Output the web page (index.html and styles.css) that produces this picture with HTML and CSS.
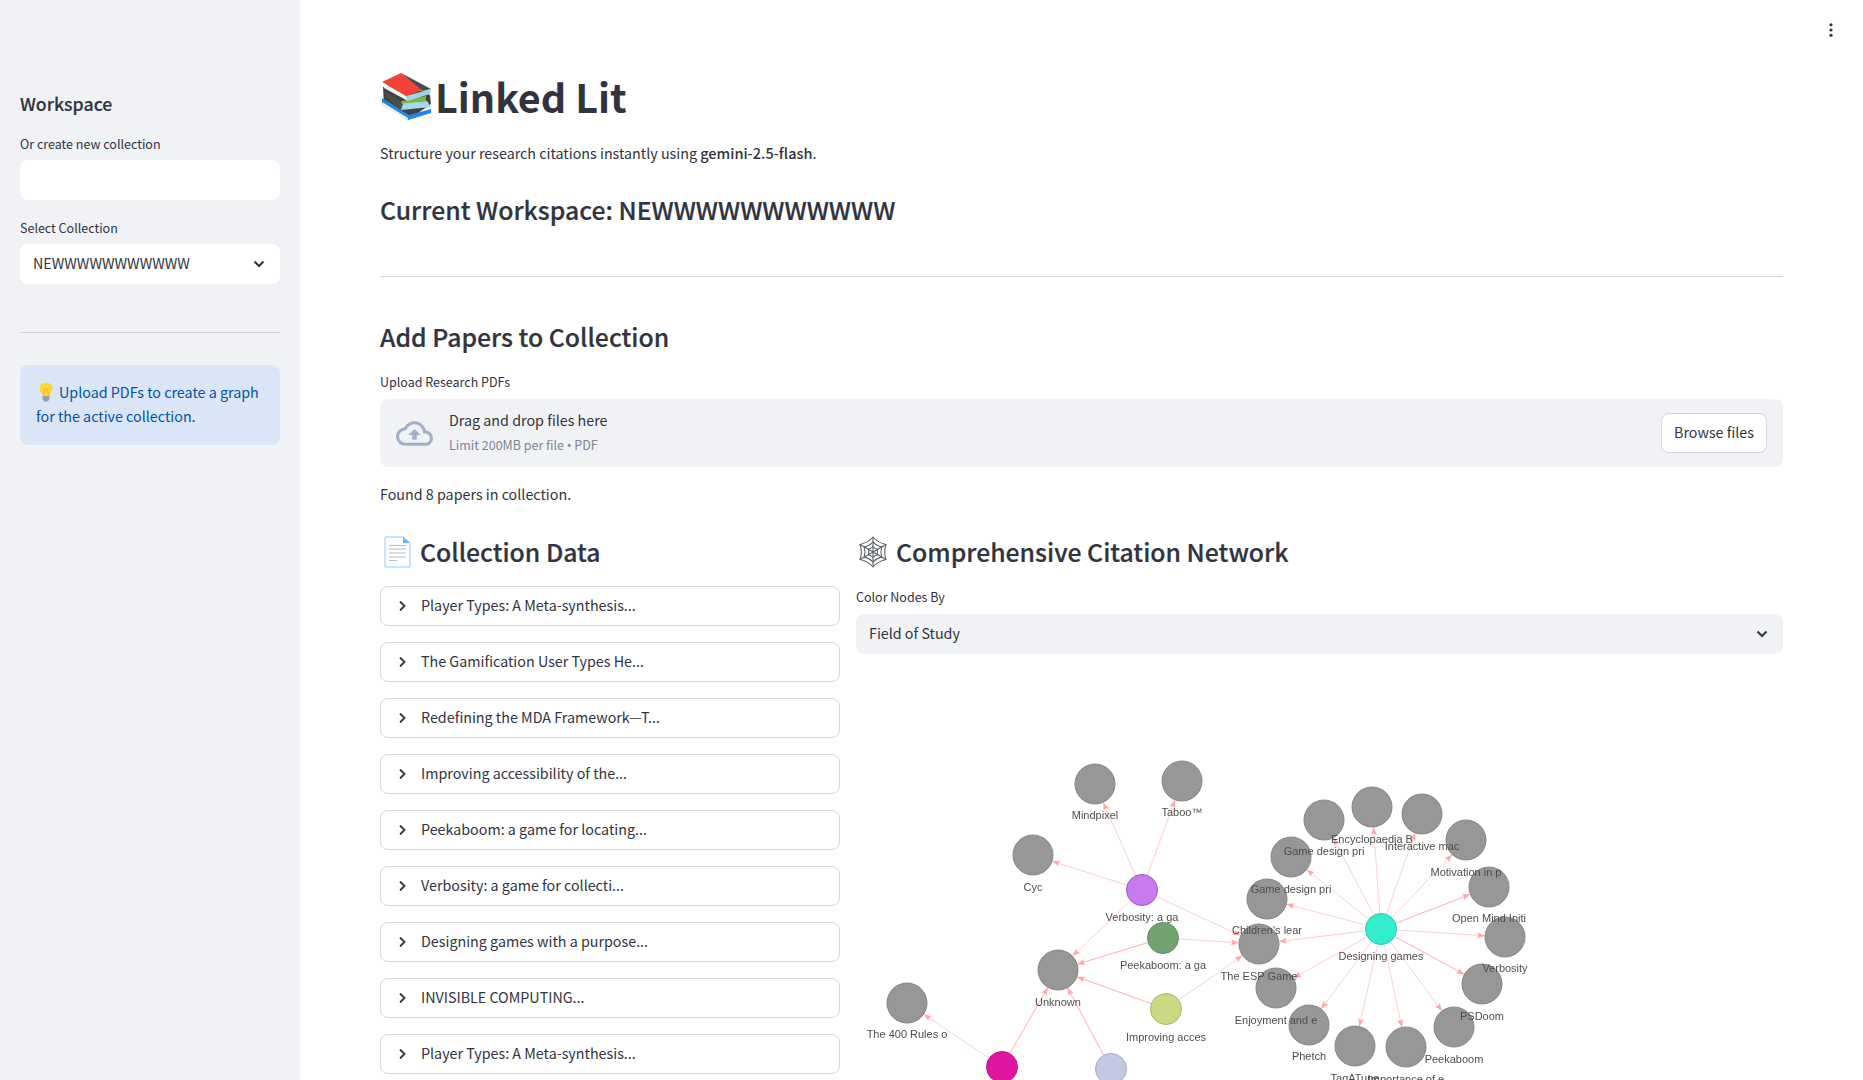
FILE: index.html
```html
<!DOCTYPE html>
<html lang="en">
<head>
<meta charset="utf-8">
<title>Linked Lit</title>
<link rel="stylesheet" href="styles.css">
</head>
<body>
<aside class="sidebar">
  <h3 class="side-title">Workspace</h3>
  <label class="field-label first">Or create new collection</label>
  <div class="input"></div>
  <label class="field-label second">Select Collection</label>
  <div class="select white">
    <span>NEWWWWWWWWWWW</span>
    <svg class="chev" viewBox="0 0 12 8"><path d="M1.5 1.5 6 6l4.5-4.5"/></svg>
  </div>
  <hr class="side-rule">
  <div class="info">
    <svg class="bulb" viewBox="0 0 16 20">
      <path d="M8 .5C4 .5 1.5 3.3 1.5 6.6c0 3 2.3 4.4 2.8 7.4h7.4c.5-3 2.8-4.4 2.8-7.4C14.500 3.300 12 .5 8 .5z" fill="#fdd835"/>
      <path d="M5.500 13.800 6.800 7h2.400l1.300 6.800" fill="none" stroke="#f9a825" stroke-width=".8"/>
      <path d="M4.600 14h6.800v3.200L9.800 19.500H6.200L4.600 17.200z" fill="#90a4ae"/>
    </svg><span>Upload PDFs to create a graph for the active collection.</span>
  </div>
</aside>

<main class="main">
  <svg class="dots" viewBox="0 0 4 16"><circle cx="2" cy="2" r="1.800"/><circle cx="2" cy="8" r="1.800"/><circle cx="2" cy="14" r="1.800"/></svg>

  <h1 class="title">
    <svg class="books" viewBox="12 12 52 50">
      <path d="M14 27 32 20 61 35 62 44 39 60 15 45z" fill="#424242"/>
      <path d="M13 38 40 55 62 49 62 53 39 60 13 44z" fill="#1e88e5"/>
      <path d="M13 42 39 58 39 60 14 46z" fill="#eceff1"/>
      <path d="M30 43 58 41 62 47 32 50z" fill="#a5d8e6"/>
      <path d="M33 41 57 36 57 41 30 44z" fill="#7cb342"/>
      <path d="M16 31 34 44 32 50 18 38z" fill="#4e4e4e"/>
      <path d="M13 22 32 13 54 30 37 36z" fill="#f44336"/>
      <path d="M32 13 62 29 54 31z" fill="#4a4a4a"/>
      <path d="M37 36 62 29 61 34 39 41z" fill="#9fd4e0"/>
      <path d="M13 22 37 36 39 41 15 28z" fill="#f5f5f5"/>
    </svg><span>Linked Lit</span>
  </h1>
  <p class="lead">Structure your research citations instantly using <strong>gemini-2.5-flash</strong>.</p>
  <h3 class="heading workspace">Current Workspace: NEWWWWWWWWWWW</h3>
  <hr class="rule">
  <h3 class="heading add">Add Papers to Collection</h3>
  <label class="field-label upload">Upload Research PDFs</label>
  <section class="drop">
    <svg class="cloud" viewBox="0 0 24 24"><path d="M19.350 10.040C18.670 6.590 15.640 4 12 4 9.110 4 6.600 5.640 5.350 8.040 2.340 8.360 0 10.910 0 14c0 3.310 2.690 6 6 6h13c2.760 0 5-2.240 5-5 0-2.640-2.050-4.780-4.650-4.960zM19 18H6c-2.210 0-4-1.790-4-4 0-2.050 1.530-3.760 3.560-3.970l1.070-.11.5-.95C8.080 7.140 9.940 6 12 6c2.620 0 4.880 1.860 5.390 4.430l.3 1.500 1.530.11c1.560.1 2.780 1.410 2.780 2.960 0 1.650-1.350 3-3 3zM8 13h2.550v3h2.900v-3H16l-4-4z"/></svg>
    <div class="drop-text">
      <div class="drop-main">Drag and drop files here</div>
      <div class="drop-sub">Limit 200MB per file <span class="bullet">•</span> PDF</div>
    </div>
    <button class="browse">Browse files</button>
  </section>
  <p class="found">Found 8 papers in collection.</p>

  <div class="columns">
    <section class="col-left">
      <h3 class="heading with-icon">
        <svg class="doc" viewBox="14 11 27 32">
          <path d="M15 12h18l7 6v24H15z" fill="#fff" stroke="#90caf9"/>
          <path d="M33 12l7 6h-7z" fill="#64b5f6"/>
          <path d="M19 20.500h17M19 24h17M19 28h17M19 32h17" stroke="#b0bec5" fill="none"/>
          <path d="M19 35.500h8" stroke="#b0bec5" fill="none"/>
        </svg><span>Collection Data</span>
      </h3>
      <ul class="expanders">
        <li class="expander"><svg class="arrow" viewBox="0 0 8 12"><path d="M2 1.500 6.500 6 2 10.500"/></svg>Player Types: A Meta-synthesis...</li>
        <li class="expander"><svg class="arrow" viewBox="0 0 8 12"><path d="M2 1.500 6.500 6 2 10.500"/></svg>The Gamification User Types He...</li>
        <li class="expander"><svg class="arrow" viewBox="0 0 8 12"><path d="M2 1.500 6.500 6 2 10.500"/></svg>Redefining the MDA Framework—T...</li>
        <li class="expander"><svg class="arrow" viewBox="0 0 8 12"><path d="M2 1.500 6.500 6 2 10.500"/></svg>Improving accessibility of the...</li>
        <li class="expander"><svg class="arrow" viewBox="0 0 8 12"><path d="M2 1.500 6.500 6 2 10.500"/></svg>Peekaboom: a game for locating...</li>
        <li class="expander"><svg class="arrow" viewBox="0 0 8 12"><path d="M2 1.500 6.500 6 2 10.500"/></svg>Verbosity: a game for collecti...</li>
        <li class="expander"><svg class="arrow" viewBox="0 0 8 12"><path d="M2 1.500 6.500 6 2 10.500"/></svg>Designing games with a purpose...</li>
        <li class="expander"><svg class="arrow" viewBox="0 0 8 12"><path d="M2 1.500 6.500 6 2 10.500"/></svg>INVISIBLE COMPUTING...</li>
        <li class="expander"><svg class="arrow" viewBox="0 0 8 12"><path d="M2 1.500 6.500 6 2 10.500"/></svg>Player Types: A Meta-synthesis...</li>
      </ul>
    </section>

    <section class="col-right">
      <h3 class="heading with-icon">
        <svg class="web" viewBox="-16 -16 32 32">
          <defs><path id="ring" vector-effect="non-scaling-stroke" d="M0-15Q5.200-9 13-7.500 10.400 0 13 7.500 5.200 9 0 15-5.200 9-13 7.500-10.400 0-13-7.500-5.200-9 0-15z"/></defs>
          <g class="web-lines">
            <use href="#ring"/>
            <use href="#ring" transform="scale(.68)"/>
            <use href="#ring" transform="scale(.36)"/>
            <path d="M0-15V15M13-7.500-13 7.500M13 7.500-13-7.500"/>
          </g>
        </svg><span>Comprehensive Citation Network</span>
      </h3>
      <label class="field-label color">Color Nodes By</label>
      <div class="select grey">
        <span>Field of Study</span>
        <svg class="chev" viewBox="0 0 12 8"><path d="M1.500 1.500 6 6l4.500-4.500"/></svg>
      </div>
      <svg class="graph" viewBox="856 654 927 426">
        <defs>
          <marker id="tip" markerUnits="userSpaceOnUse" markerWidth="8" markerHeight="6" viewBox="0 0 8 6" refX="28" refY="3" orient="auto"><path d="M0 0 8 3 0 6 1.500 3z" fill="#ffa8a8"/></marker>
        </defs>
        <g class="edges">
          <line x1="1142" y1="890" x2="1095" y2="784"/>
          <line x1="1142" y1="890" x2="1182" y2="781"/>
          <line x1="1142" y1="890" x2="1033" y2="855"/>
          <line x1="1142" y1="890" x2="1058" y2="970"/>
          <line x1="1142" y1="890" x2="1259" y2="944"/>
          <line x1="1163" y1="938" x2="1259" y2="944"/>
          <line class="strong" x1="1163" y1="938" x2="1058" y2="970"/>
          <line class="strong" x1="1166" y1="1009" x2="1058" y2="970"/>
          <line x1="1166" y1="1009" x2="1259" y2="944"/>
          <line x1="1002" y1="1067" x2="907" y2="1003"/>
          <line class="strong" x1="1002" y1="1067" x2="1058" y2="970"/>
          <line class="strong" x1="1111" y1="1069" x2="1058" y2="970"/>
          <line x1="1381" y1="929" x2="1372" y2="807"/>
          <line x1="1381" y1="929" x2="1324" y2="820"/>
          <line x1="1381" y1="929" x2="1422" y2="814"/>
          <line x1="1381" y1="929" x2="1466" y2="840"/>
          <line x1="1381" y1="929" x2="1291" y2="857"/>
          <line class="strong" x1="1381" y1="929" x2="1489" y2="887"/>
          <line x1="1381" y1="929" x2="1267" y2="899"/>
          <line x1="1381" y1="929" x2="1505" y2="937"/>
          <line x1="1381" y1="929" x2="1259" y2="944"/>
          <line class="strong" x1="1381" y1="929" x2="1482" y2="984"/>
          <line x1="1381" y1="929" x2="1276" y2="988"/>
          <line x1="1381" y1="929" x2="1454" y2="1027"/>
          <line x1="1381" y1="929" x2="1309" y2="1025"/>
          <line x1="1381" y1="929" x2="1355" y2="1046"/>
          <line x1="1381" y1="929" x2="1406" y2="1047"/>
        </g>
        <g class="nodes">
          <circle cx="1095" cy="784" r="20"/>
          <circle cx="1182" cy="781" r="20"/>
          <circle cx="1033" cy="855" r="20"/>
          <circle cx="1058" cy="970" r="20"/>
          <circle cx="907" cy="1003" r="20"/>
          <circle cx="1324" cy="820" r="20"/>
          <circle cx="1372" cy="807" r="20"/>
          <circle cx="1422" cy="814" r="20"/>
          <circle cx="1466" cy="840" r="20"/>
          <circle cx="1291" cy="857" r="20"/>
          <circle cx="1489" cy="887" r="20"/>
          <circle cx="1267" cy="899" r="20"/>
          <circle cx="1505" cy="937" r="20"/>
          <circle cx="1259" cy="944" r="20"/>
          <circle cx="1482" cy="984" r="20"/>
          <circle cx="1276" cy="988" r="20"/>
          <circle cx="1454" cy="1027" r="20"/>
          <circle cx="1309" cy="1025" r="20"/>
          <circle cx="1355" cy="1046" r="20"/>
          <circle cx="1406" cy="1047" r="20"/>
          <circle class="purple" cx="1142" cy="890" r="15.500"/>
          <circle class="green" cx="1163" cy="938" r="15.500"/>
          <circle class="olive" cx="1166" cy="1009" r="15.500"/>
          <circle class="magenta" cx="1002" cy="1067" r="15.500"/>
          <circle class="lavender" cx="1111" cy="1069" r="15.500"/>
          <circle class="teal" cx="1381" cy="929" r="15.500"/>
        </g>
        <g class="labels">
          <text x="1095" y="819">Mindpixel</text>
          <text x="1182" y="816">Taboo™</text>
          <text x="1033" y="891">Cyc</text>
          <text x="1142" y="921">Verbosity: a ga</text>
          <text x="1163" y="969">Peekaboom: a ga</text>
          <text x="1058" y="1006">Unknown</text>
          <text x="907" y="1038">The 400 Rules o</text>
          <text x="1166" y="1041">Improving acces</text>
          <text x="1381" y="960">Designing games</text>
          <text x="1372" y="843">Encyclopaedia B</text>
          <text x="1324" y="855">Game design pri</text>
          <text x="1422" y="850">Interactive mac</text>
          <text x="1466" y="876">Motivation in p</text>
          <text x="1291" y="893">Game design pri</text>
          <text x="1489" y="922">Open Mind Initi</text>
          <text x="1267" y="934">Children's lear</text>
          <text x="1505" y="972">Verbosity</text>
          <text x="1259" y="980">The ESP Game</text>
          <text x="1482" y="1020">PSDoom</text>
          <text x="1276" y="1024">Enjoyment and e</text>
          <text x="1454" y="1063">Peekaboom</text>
          <text x="1309" y="1060">Phetch</text>
          <text x="1355" y="1082">TagATune</text>
          <text x="1406" y="1083">Importance of e</text>
        </g>
      </svg>
    </section>
  </div>
</main>
</body>
</html>
```
FILE: styles.css
```css
* { box-sizing: border-box; }
html, body { height: 100%; }
body {
  margin: 0;
  display: flex;
  height: 1080px;
  overflow: hidden;
  background: #fff;
  color: #31333f;
  font-family: "Noto Sans CJK SC", "Noto Sans", sans-serif;
  font-size: 14.3px;
  line-height: 24px;
}
h1, h3, p, ul { margin: 0; padding: 0; }
hr { border: 0; height: 1px; background: #d3d4d9; margin: 0; }

.sidebar {
  flex: 0 0 300px;
  height: 1080px;
  background: #f0f2f6;
  padding: 89px 20px 0;
  display: flex;
  flex-direction: column;
}
.side-title { font-size: 17.700px; font-weight: 500; line-height: 28px; -webkit-text-stroke: .15px #31333f; }
.field-label { display: block; font-size: 12.500px; line-height: 20px; }
.field-label.first { margin-top: 17px; }
.field-label.second { margin-top: 18px; }
.input { height: 40px; margin-top: 6px; background: #fff; border-radius: 8px; }
.select {
  height: 40px;
  border-radius: 8px;
  display: flex;
  align-items: center;
  justify-content: space-between;
  padding: 0 15px 2px 13px;
}
.select.white { background: #fff; margin-top: 6px; }
.select.grey { background: #f0f2f6; margin-top: 7px; }
.chev { width: 12px; height: 8px; margin-top: 2px; fill: none; stroke: #31333f; stroke-width: 2; }
.side-rule { margin-top: 48px; }
.info {
  margin-top: 32px;
  height: 80px;
  padding: 15px 16px 16px;
  border-radius: 8px;
  background: #dae5f7;
  color: #0054a3;
}
.bulb { width: 16px; height: 20px; margin: 0 5px 0 2px; vertical-align: -4px; }

.main { flex: 1; position: relative; padding: 72px 80px 0; min-width: 0; }
.dots { position: absolute; top: 23px; right: 30px; width: 4px; height: 14px; fill: #31333f; }
.title {
  display: flex;
  align-items: center;
  height: 50px;
  font-size: 39.500px;
  font-weight: 700;
  line-height: 50px;
}
.title span { margin-bottom: 2px; }
.books { width: 52px; height: 50px; margin-left: 1px; margin-right: 2px; }
.lead { margin-top: 19px; }
.lead strong { font-size: 14.500px; font-weight: 500; }
.heading { font-size: 24.800px; font-weight: 500; line-height: 40px; -webkit-text-stroke: .2px #31333f; }
.workspace { margin-top: 24px; }
.rule { margin-top: 47px; }
.add { margin-top: 39px; }
.field-label.upload { margin-top: 16px; }
.drop {
  margin-top: 7px;
  height: 68px;
  background: #f0f2f6;
  border-radius: 8px;
  display: flex;
  align-items: center;
  padding: 0 16px;
}
.cloud { width: 37px; height: 37px; fill: #a3afc8; flex: none; }
.drop-text { margin-left: 16px; flex: 1; padding-bottom: 2px; }
.drop-main { line-height: 24px; margin-top: -1px; }
.drop-sub { font-size: 12.500px; line-height: 20px; margin-top: 3px; color: #808495; }
.bullet { font-family: "Noto Sans", sans-serif; }
.browse {
  height: 40px;
  width: 106px;
  padding: 0 0 2px;
  background: #fff;
  border: 1px solid #d5d6db;
  border-radius: 8px;
  color: #31333f;
  font: inherit;
}
.found { margin-top: 15px; }

.columns { display: grid; grid-template-columns: 460px 1fr; column-gap: 16px; margin-top: 27px; }
.with-icon { display: flex; align-items: center; height: 40px; }
.with-icon span { margin-bottom: 4px; }
.doc { width: 27px; height: 32px; margin: 0 9px 2px 4px; }
.web { width: 32px; height: 32px; margin: 0 7px 2px 1px; }
.web-lines { fill: none; stroke: #5f6368; stroke-width: 1.100; }
.web-lines path { vector-effect: non-scaling-stroke; }
.expanders { list-style: none; margin-top: 13px; display: flex; flex-direction: column; gap: 16px; }
.expander {
  height: 40px;
  border: 1px solid #d5d6db;
  border-radius: 8px;
  display: flex;
  align-items: center;
  padding: 0 0 2px 17px;
}
.arrow { width: 8px; height: 12px; margin: 2px 15px 0 0; fill: none; stroke: #31333f; stroke-width: 1.800; }
.field-label.color { margin-top: 14px; }
.graph { display: block; width: 927px; height: 426px; filter: blur(.3px); }
.edges line { stroke: #ffd0d0; stroke-width: 1; marker-end: url(#tip); }
.edges line.strong { stroke: #ffb0b0; }
.nodes circle { fill: #979797; stroke: #858585; stroke-width: 1; }
.nodes .purple { fill: #c77bec; stroke: #9a55cf; }
.nodes .green { fill: #72a272; stroke: #5f8f5f; }
.nodes .olive { fill: #cbd884; stroke: #a9b96a; }
.nodes .magenta { fill: #de15a0; stroke: #c40f8c; }
.nodes .lavender { fill: #c3c8e3; stroke: #a3a9cc; }
.nodes .teal { fill: #33eecc; stroke: #22ccaa; }
.labels text {
  font-family: "Liberation Sans", Arial, sans-serif;
  font-size: 11px;
  fill: #4d4d4d;
  text-anchor: middle;
}
```
